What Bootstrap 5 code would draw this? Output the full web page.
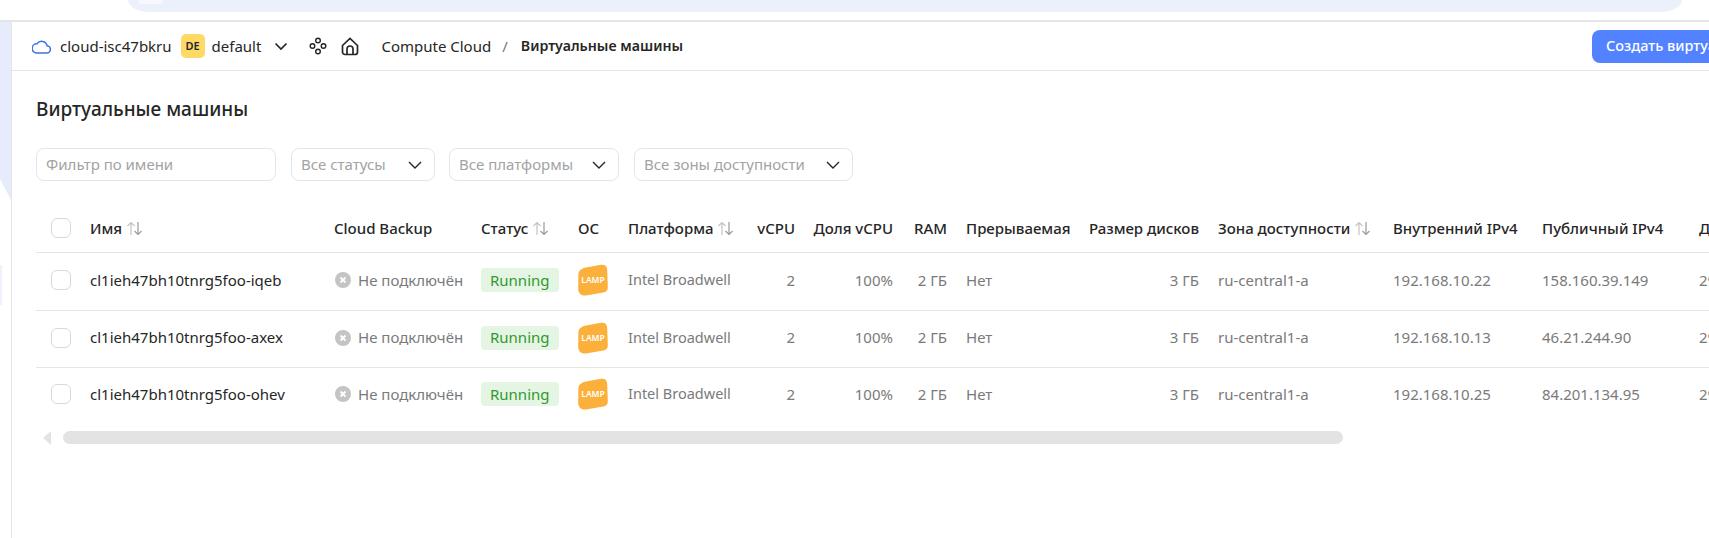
<!DOCTYPE html>
<html lang="ru">
<head>
<meta charset="utf-8">
<link href="https://cdn.jsdelivr.net/npm/bootstrap@5.3.0/dist/css/bootstrap.min.css" rel="stylesheet">
<style>
html,body{height:538px;overflow:hidden;background:#fff}
body{font-family:"Noto Sans","Open Sans",sans-serif;font-size:15px;color:#262626}
.topstrip{height:22px;border-bottom:2px solid #e5e5e5;padding-left:128px;padding-right:27px}
.toppill{height:12px;background:#ebf0fa;border-radius:0 0 22px 22px / 0 0 12px 12px;padding-left:10px}
.toppill-dot{width:25px;height:4px;background:#f6f8fd;border-radius:0 0 13px 13px}
.shell{height:516px}
.rail{width:12px;flex:none;border-right:1px solid #e5e5e5}
.rail-top{height:178px;background:#e6ecfb;clip-path:polygon(0 0,100% 0,100% 100%,0 88%)}
.rail-bit{width:2px;height:40px;margin-top:65px;background:#eef2fc}
.mainpane{min-width:0;flex:1;overflow:hidden}
.hdrbar{height:49px;border-bottom:1px solid #e5e5e5;padding-left:20px;white-space:nowrap}
.cloudname{margin-left:9px}
.avatar{width:24px;height:24px;background:#ffd966;border-radius:5px;font-size:11px;font-weight:600;margin-left:9px;margin-right:7px;flex:none}
.ic-chev{margin-left:13px;flex:none}
.ic-dots{margin-left:21px;flex:none}
.ic-home{margin-left:14px;flex:none}
.crumb-a{margin-left:22px}
.crumb-sep{margin:0 13px 0 11px;color:#777}
.crumb-b{font-weight:600;font-size:14.2px}
.createbtn{margin-left:auto;margin-right:-113px;background:#5282ff;color:#fff;border:0;border-radius:8px;height:33px;width:230px;padding:0 0 0 14px;font-size:14.5px;font-weight:500;text-align:left;flex:none;white-space:nowrap;overflow:hidden}
.pagetitle{font-size:19px;font-weight:500;margin:26px 0 0 24px;line-height:24px}
.filters{margin:27px 0 0 24px;gap:15px;white-space:nowrap}
.fbox{height:33px;border:1px solid #e5e5e5;border-radius:8px;color:#a3a3a3;padding:0 12px 0 9px;flex:none}
.f-name{width:240px}.f-status{width:144px;margin-right:-1px}.f-plat{width:170px}.f-zone{width:219px}
.tablewrap{margin:24px 0 0 24px;overflow:hidden}
.vmtable{table-layout:fixed;border-collapse:collapse;width:1785px;margin:0}
.vmtable th{font-weight:500;color:#262626;height:47px;border-bottom:1px solid #e5e5e5;padding:0;white-space:nowrap;vertical-align:middle}
.vmtable td{color:#7a7a7a;height:58px;border-bottom:1px solid #e5e5e5;padding:0 0 2px;white-space:nowrap;vertical-align:middle}
.vmtable tr:nth-child(2) td{height:57px}
.vmtable tr:last-child td{border-bottom:0;height:56px}
.vmtable td.namecell{color:#262626}
.vmtable td.platcell{font-size:14.5px}
.c1{width:54px}.c2{width:244px}.c3{width:147px}.c4{width:97px}.c5{width:50px}.c6{width:117px}.c7{width:50px}.c8{width:98px}.c9{width:54px}.c10{width:19px}.c11{width:113px}.c12{width:120px}.c13{width:19px}.c14{width:175px}.c15{width:149px}.c16{width:157px}.c17{width:122px}
.cbx{display:block;width:20px;height:20px;border:1px solid #d9d9d9;border-radius:6px;margin-left:15px}
.statuspill{display:inline-flex;align-items:center;height:24px;padding:0 9px;background:#e4f5e4;color:#33992e;border-radius:4px}
.num{text-align:right}
.xdot{width:16px;height:16px;flex:none;margin:0 7px 0 1px}
.sortic{vertical-align:-2px}
.scrollrow{margin:7px 0 0 31px;height:15px}
.thumbbar{width:1280px;height:13px;background:#e3e3e3;border-radius:7px;margin-left:12px}
.leftarrow{width:0;height:0;border-top:7px solid transparent;border-bottom:7px solid transparent;border-right:8px solid #e3e3e3}
</style>
</head>
<body>
<div class="topstrip"><div class="toppill"><div class="toppill-dot"></div></div></div>
<div class="shell d-flex">
<div class="rail"><div class="rail-top"></div><div class="rail-bit"></div></div>
<div class="mainpane">
<div class="hdrbar d-flex align-items-center">
<svg width="19" height="15" viewBox="0 0 19 15" fill="none" stroke="#3f72e0" stroke-width="1.5"><path d="M4.500 14h10a3.600 3.600 0 0 0 .6-7.200A5.600 5.600 0 0 0 5 4.800 4.600 4.600 0 0 0 4.500 14Z"/></svg>
<span class="cloudname">cloud-isc47bkru</span>
<span class="avatar d-inline-flex align-items-center justify-content-center">DE</span>
<span>default</span>
<svg class="ic-chev" width="14" height="9" viewBox="0 0 14 9" fill="none" stroke="#262626" stroke-width="1.7"><path d="M1.500 1.500 7 7l5.500-5.500"/></svg>
<svg class="ic-dots" width="18" height="18" viewBox="0 0 18 18" fill="none" stroke="#262626" stroke-width="1.400"><circle cx="9" cy="3.500" r="2.300"/><circle cx="3.500" cy="9" r="2.300"/><circle cx="14.500" cy="9" r="2.300"/><circle cx="9" cy="14.500" r="2.300"/></svg>
<svg class="ic-home" width="18" height="19" viewBox="0 0 18 19" fill="none" stroke="#262626" stroke-width="1.700"><path d="M1.500 8.500 9 1.500l7.500 7v6.500a2.500 2.500 0 0 1-2.500 2.500H4a2.500 2.500 0 0 1-2.500-2.500Z"/><path d="M6 17.500V12a3 3 0 0 1 6 0v5.500"/></svg>
<span class="crumb-a">Compute Cloud</span><span class="crumb-sep">/</span><span class="crumb-b">Виртуальные машины</span>
<button class="createbtn" type="button">Создать виртуальную машину</button>
</div>
<h1 class="pagetitle">Виртуальные машины</h1>
<div class="filters d-flex">
<div class="fbox f-name d-flex align-items-center">Фильтр по имени</div>
<div class="fbox f-status d-flex align-items-center justify-content-between">Все статусы<svg width="14" height="8" viewBox="0 0 14 8" fill="none" stroke="#262626" stroke-width="1.4"><path d="M1 1l6 6 6-6"/></svg></div>
<div class="fbox f-plat d-flex align-items-center justify-content-between">Все платформы<svg width="14" height="8" viewBox="0 0 14 8" fill="none" stroke="#262626" stroke-width="1.4"><path d="M1 1l6 6 6-6"/></svg></div>
<div class="fbox f-zone d-flex align-items-center justify-content-between">Все зоны доступности<svg width="14" height="8" viewBox="0 0 14 8" fill="none" stroke="#262626" stroke-width="1.4"><path d="M1 1l6 6 6-6"/></svg></div>
</div>
<div class="tablewrap">
<table class="vmtable">
<colgroup><col class="c1"><col class="c2"><col class="c3"><col class="c4"><col class="c5"><col class="c6"><col class="c7"><col class="c8"><col class="c9"><col class="c10"><col class="c11"><col class="c12"><col class="c13"><col class="c14"><col class="c15"><col class="c16"><col class="c17"></colgroup>
<thead id="h"></thead>
<tbody id="b"></tbody>
</table>
</div>
<div class="scrollrow d-flex align-items-center"><div class="leftarrow"></div><div class="thumbbar"></div></div>
</div>
</div>
<script src="https://cdn.jsdelivr.net/npm/bootstrap@5.3.0/dist/js/bootstrap.bundle.min.js"></script>
<script>
var s='<svg class="sortic" width="17" height="15" viewBox="0 0 17 15" fill="none" stroke-width="1.2"><path d="M5 14V1.500M1.500 5 5 1.500 8.500 5" stroke="#c4c4c4"/><path d="M12 1v12.500M8.500 10l3.500 3.500 3.500-3.500" stroke="#9a9a9a"/></svg>';
document.getElementById('h').innerHTML='<tr><th><span class="cbx"></span></th><th>Имя '+s+'</th><th>Cloud Backup</th><th>Статус '+s+'</th><th>ОС</th><th>Платформа '+s+'</th><th class="num">vCPU</th><th class="num">Доля vCPU</th><th class="num">RAM</th><th></th><th>Прерываемая</th><th class="num">Размер дисков</th><th></th><th>Зона доступности '+s+'</th><th>Внутренний IPv4</th><th>Публичный IPv4</th><th>Дата создания</th></tr>';
var rows=[["iqeb","192.168.10.22","158.160.39.149"],["axex","192.168.10.13","46.21.244.90"],["ohev","192.168.10.25","84.201.134.95"]];
document.getElementById('b').innerHTML=rows.map(function(r){return '<tr><td><span class="cbx"></span></td><td class="namecell">cl1ieh47bh10tnrg5foo-'+r[0]+'</td><td><span class="d-flex align-items-center"><svg class="xdot" viewBox="0 0 16 16"><circle cx="8" cy="8" r="8" fill="#c4c4c4"/><path d="M5.500 5.500l5 5M10.500 5.500l-5 5" stroke="#fff" stroke-width="1.800"/></svg>Не подключён</span></td><td><span class="statuspill">Running</span></td><td><svg width="30" height="32" viewBox="0 0 30 32"><path d="M8 3.500 23 .8c3.500-.6 6 1.500 6.200 4.700l.6 18c.1 2.800-1.700 4.600-4.500 5L8 31.500c-4 .6-7.500-1.800-7.800-6L.4 10C.6 6.500 4 4.300 8 3.500Z" fill="#fbb03b"/><text x="15" y="19" text-anchor="middle" font-size="8.500" font-weight="600" fill="#fff" font-family="Noto Sans">LAMP</text></svg></td><td class="platcell">Intel Broadwell</td><td class="num">2</td><td class="num">100%</td><td class="num">2 ГБ</td><td></td><td>Нет</td><td class="num">3 ГБ</td><td></td><td>ru-central1-a</td><td>'+r[1]+'</td><td>'+r[2]+'</td><td>29.03.2023</td></tr>'}).join('');
</script>
</body>
</html>
